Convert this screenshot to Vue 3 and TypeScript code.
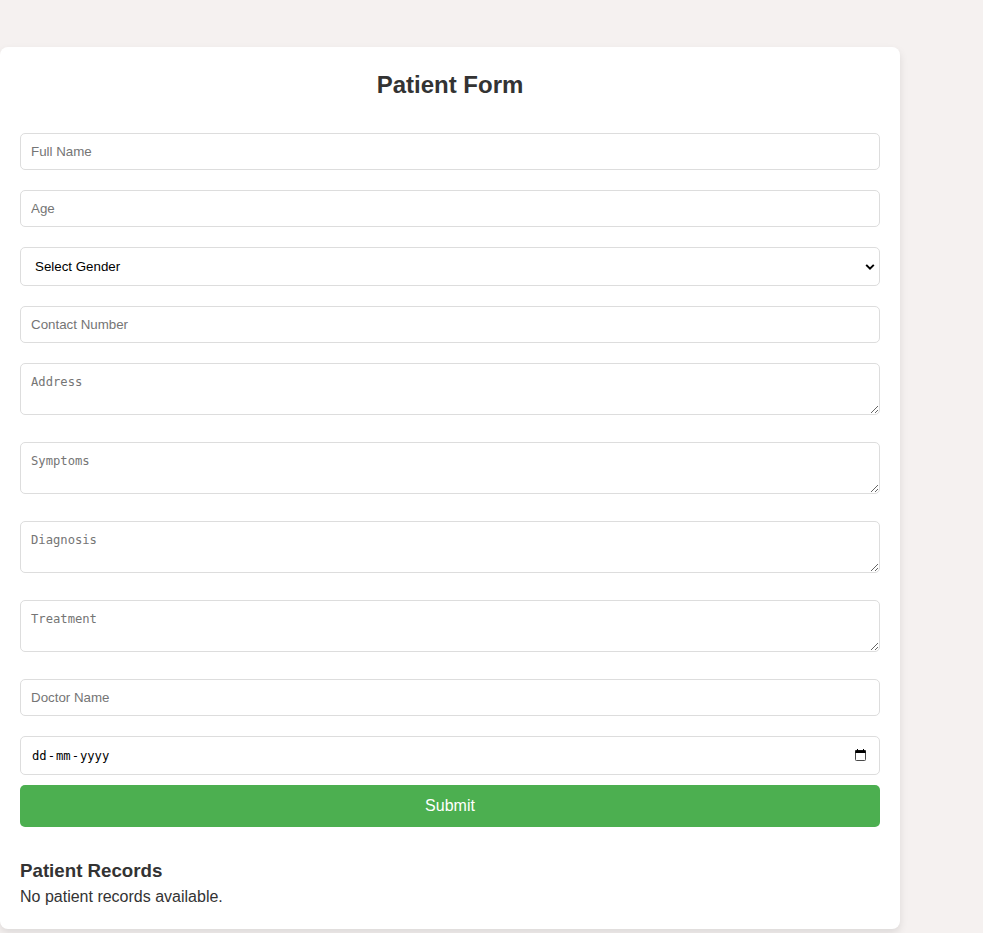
<script setup lang="ts">
import { ref } from 'vue'

interface Field {
  name: string
  label: string
  kind: 'text' | 'select' | 'area' | 'date'
}

const fields: Field[] = [
  { name: 'fullName', label: 'Full Name', kind: 'text' },
  { name: 'age', label: 'Age', kind: 'text' },
  { name: 'gender', label: 'Select Gender', kind: 'select' },
  { name: 'contact', label: 'Contact Number', kind: 'text' },
  { name: 'address', label: 'Address', kind: 'area' },
  { name: 'symptoms', label: 'Symptoms', kind: 'area' },
  { name: 'diagnosis', label: 'Diagnosis', kind: 'area' },
  { name: 'treatment', label: 'Treatment', kind: 'area' },
  { name: 'doctor', label: 'Doctor Name', kind: 'text' },
  { name: 'date', label: 'Date', kind: 'date' },
]

const dateParts: string[] = ['dd', '-', 'mm', '-', 'yyyy']

const values = ref<Record<string, string>>(
  Object.fromEntries(fields.map((f) => [f.name, ''])),
)
const records = ref<Record<string, string>[]>([])

function submit(): void {
  records.value.push({ ...values.value })
  for (const f of fields) values.value[f.name] = ''
}
</script>

<template>
  <main class="page">
    <section class="card">
      <h2 class="title">Patient Form</h2>
      <form class="form" @submit.prevent="submit">
        <template v-for="f in fields" :key="f.name">
          <input v-if="f.kind === 'text'" v-model="values[f.name]" class="control" type="text" :placeholder="f.label" />
          <div v-else-if="f.kind === 'select'" class="select-wrap">
            <select v-model="values[f.name]" class="control select">
              <option value="">{{ f.label }}</option>
              <option>Male</option>
              <option>Female</option>
              <option>Other</option>
            </select>
            <svg class="chevron" viewBox="0 0 10 6" width="10" height="6">
              <path d="M1.2 0.9L5 4.6L8.8 0.9" fill="none" stroke="#000" stroke-width="2" />
            </svg>
          </div>
          <textarea v-else-if="f.kind === 'area'" v-model="values[f.name]" class="control area" :placeholder="f.label"></textarea>
          <div v-else class="control date" tabindex="0">
            <div class="date-parts">
              <span v-for="(part, i) in dateParts" :key="i" class="date-part">{{ part }}</span>
            </div>
            <svg class="calendar" viewBox="0 0 11 12" width="11" height="12">
              <rect x="0.5" y="1.5" width="10" height="10" rx="0.8" fill="none" stroke="#4a4a4a" />
              <path d="M0.3 1.2H10.7V4H0.3zM2 0H3V2H2zM8 0H9V2H8z" fill="#000" />
            </svg>
          </div>
        </template>
        <button class="submit" type="submit">Submit</button>
      </form>
      <h3 class="subtitle">Patient Records</h3>
      <p v-if="!records.length" class="empty">No patient records available.</p>
      <p v-for="(r, i) in records" :key="i" class="empty">{{ r.fullName }}</p>
    </section>
  </main>
</template>

<style>
body {
  margin: 0;
  background: #f5f1f0;
}
</style>

<style scoped>
.page {
  box-sizing: border-box;
  height: 933px;
  padding-top: 47px;
  overflow: hidden;
  font-family: "Liberation Sans", Arial, sans-serif;
  color: #333;
}
.card {
  box-sizing: border-box;
  width: 900px;
  height: 882px;
  padding: 24px 20px 20px;
  border-radius: 8px;
  background: #fff;
  box-shadow: 0 4px 8px rgba(0, 0, 0, 0.1);
}
.title {
  margin: 0 0 34px;
  font-size: 24px;
  line-height: 28px;
  text-align: center;
}
.form {
  display: flex;
  flex-direction: column;
}
.control {
  box-sizing: border-box;
  width: 100%;
  height: 37px;
  margin: 0 0 20px;
  padding: 10px;
  border: 1px solid #ddd;
  border-radius: 5px;
  outline: none;
  background: #fff;
  color: #000;
  font: 13.3333px "Liberation Sans", Arial, sans-serif;
}
.control::placeholder {
  color: #757575;
}
.select-wrap {
  display: grid;
  align-items: center;
  margin-bottom: 20px;
}
.select {
  grid-area: 1 / 1;
  height: 39px;
  margin: 0;
  padding: 10px 14px;
  appearance: none;
}
.chevron {
  grid-area: 1 / 1;
  justify-self: end;
  margin-right: 5px;
  pointer-events: none;
}
.area {
  height: 52px;
  margin-bottom: 27px;
  padding-top: 11px;
  padding-bottom: 9px;
  font: 12.18px/15px "DejaVu Sans Mono", monospace;
  resize: vertical;
}
.date {
  display: flex;
  align-items: center;
  justify-content: space-between;
  height: 39px;
  margin-bottom: 10px;
  padding: 0 13px 0 11px;
}
.date-parts {
  display: flex;
  gap: 1px;
  padding-top: 2px;
  font: 12.18px/15px "DejaVu Sans Mono", monospace;
}
.calendar {
  flex: none;
  margin-bottom: 1px;
}
.submit {
  height: 42px;
  padding: 0;
  border: 0;
  border-radius: 5px;
  background: #4caf50;
  color: #fff;
  font: 16px "Liberation Sans", Arial, sans-serif;
}
.subtitle {
  margin: 33px 0 0;
  font-size: 18.72px;
  line-height: 22px;
}
.empty {
  margin: 6px 0 0;
  font-size: 16px;
  line-height: 18px;
}
</style>
